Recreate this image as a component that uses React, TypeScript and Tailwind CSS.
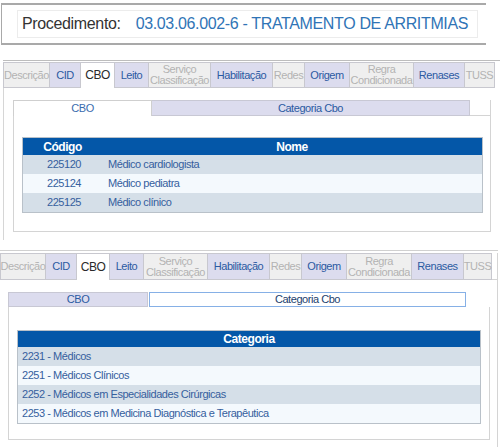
import React from "react";

type Kind = "gray" | "lav" | "sel";

const Tab = ({ w, kind, lines, first }: { w: string; kind: Kind; lines: string[]; first?: boolean }) => {
  const base =
    "flex flex-col items-center justify-center text-center leading-[11px] tracking-[-0.45px] border-t border-r border-[#c8c8cf] shrink-0 h-full";
  const k =
    kind === "gray"
      ? "bg-[#efefef] text-[#b3b3b3] border-b text-[11px]"
      : kind === "lav"
      ? "bg-[#dcdcee] text-[#2b5aa2] border-b text-[11px]"
      : "bg-white text-[#2a2a2a] text-[12px]";
  return (
    <div className={`${base} ${k} ${first ? "border-l" : ""} ${w}`}>
      {lines.map((l) => (
        <span key={l}>{l}</span>
      ))}
    </div>
  );
};

const TabRow = ({ widths, h }: { widths: string[]; h: string }) => {
  const defs: { kind: Kind; lines: string[] }[] = [
    { kind: "gray", lines: ["Descrição"] },
    { kind: "lav", lines: ["CID"] },
    { kind: "sel", lines: ["CBO"] },
    { kind: "lav", lines: ["Leito"] },
    { kind: "gray", lines: ["Serviço", "Classificação"] },
    { kind: "lav", lines: ["Habilitação"] },
    { kind: "gray", lines: ["Redes"] },
    { kind: "lav", lines: ["Origem"] },
    { kind: "gray", lines: ["Regra", "Condicionada"] },
    { kind: "lav", lines: ["Renases"] },
    { kind: "gray", lines: ["TUSS"] },
  ];
  return (
    <div className={`flex ${h}`}>
      {defs.map((d, i) => (
        <Tab key={i} w={widths[i]} kind={d.kind} lines={d.lines} first={i === 0} />
      ))}
    </div>
  );
};

const cboRows = [
  ["225120", "Médico cardiologista"],
  ["225124", "Médico pediatra"],
  ["225125", "Médico clínico"],
];

const catRows = [
  "2231 - Médicos",
  "2251 - Médicos Clínicos",
  "2252 - Médicos em Especialidades Cirúrgicas",
  "2253 - Médicos em Medicina Diagnóstica e Terapêutica",
];

export default function App() {
  return (
    <div
      className="w-[500px] h-[447px] bg-white overflow-hidden"
      style={{ fontFamily: '"Liberation Sans", Arial, sans-serif' }}
    >
      {/* Procedimento header */}
      <div className="mt-[3px] ml-px w-[485px] h-[42px] border-t-2 border-b-2 border-l border-[#a9a9a9] pt-[5px] pl-[15px]">
        <div className="w-[461px] h-[28px] border border-[#ececec] flex items-center pl-[4px] text-[16px] tracking-[-0.35px]">
          <span className="text-[#333]">Procedimento:</span>
          <span className="ml-[15px] text-[#2f74b6]">03.03.06.002-6 - TRATAMENTO DE ARRITMIAS</span>
        </div>
      </div>

      {/* Section 1 */}
      <div className="mt-[15px] ml-[3px] border-t border-[#bdbdbd] pt-px">
        <TabRow
          h="h-[26px]"
          widths={[
            "w-[47px]",
            "w-[31px]",
            "w-[34px]",
            "w-[34px]",
            "w-[62px]",
            "w-[62px]",
            "w-[32px]",
            "w-[45px]",
            "w-[64px]",
            "w-[51px]",
            "w-[30px]",
          ]}
        />
      </div>
      <div className="ml-[3px] h-[152px] border-l border-[#d6d6d6] pt-[12px] pl-[9px]">
        <div className="flex h-[16px] text-[11px] tracking-[-0.45px]">
          <div className="w-[139px] bg-white border-t border-l border-r border-[#cfcfcf] flex items-center justify-center text-[#3a6cae]">
            CBO
          </div>
          <div className="w-[318px] bg-[#dcdcee] border border-l-0 border-[#c8c8d4] flex items-center justify-center text-[#2b5aa2]">
            Categoria Cbo
          </div>
          <div className="w-[21px] border-b border-r border-[#d4d4d4]" />
        </div>
        <div className="w-[478px] h-[116px] border-l border-r border-b border-[#d4d4d4] pt-[21px] pl-[8px]">
          <div className="w-[461px] border border-[#b9c1c9] text-[11px] tracking-[-0.45px]">
            <div className="flex h-[17px] bg-[#0457a8] text-white font-bold text-[12px] items-center">
              <div className="w-[79px] text-center">Código</div>
              <div className="flex-1 text-center">Nome</div>
            </div>
            {cboRows.map((r, i) => (
              <div
                key={r[0]}
                className={`flex h-[19px] items-center text-[#35609e] ${i % 2 === 0 ? "bg-[#d5dfe8]" : "bg-[#f4f9fd]"}`}
              >
                <div className="w-[79px] pl-[24px]">{r[0]}</div>
                <div className="flex-1 pl-[6px]">{r[1]}</div>
              </div>
            ))}
          </div>
        </div>
      </div>

      {/* Section 2 */}
      <div className="mt-[10px] w-[498px] border-t border-[#d0d0d0] pt-[2px] flex">
        <TabRow
          h="h-[27px]"
          widths={[
            "w-[46px]",
            "w-[31px]",
            "w-[33px]",
            "w-[34px]",
            "w-[64px]",
            "w-[62px]",
            "w-[32px]",
            "w-[45px]",
            "w-[65px]",
            "w-[52px]",
            "w-[28px]",
          ]}
        />
        <div className="flex-1 border-b border-r border-[#d4d4d4]" />
      </div>
      <div className="w-[498px] h-[170px] border-r border-[#d4d4d4] pt-[12px] pl-[8px]">
        <div className="flex h-[15px] text-[11px] tracking-[-0.45px]">
          <div className="w-[140px] bg-[#dcdcee] border border-[#c8c8d4] flex items-center justify-center text-[#2b5aa2]">
            CBO
          </div>
          <div className="ml-px w-[317px] bg-white border border-[#86b0e6] flex items-center justify-center text-[#23416e]">
            Categoria Cbo
          </div>
        </div>
        <div className="w-[482px] h-[133px] border-l border-r border-b border-[#d4d4d4] pt-[23px] pl-[8px]">
          <div className="w-[464px] border border-[#b9c1c9] text-[11px] tracking-[-0.45px]">
            <div className="flex h-[16px] bg-[#0457a8] text-white font-bold text-[12px] items-center justify-center">
              Categoria
            </div>
            {catRows.map((r, i) => (
              <div
                key={r}
                className={`flex h-[19px] items-center pl-[4px] text-[#35609e] ${i % 2 === 0 ? "bg-[#d5dfe8]" : "bg-[#f4f9fd]"}`}
              >
                {r}
              </div>
            ))}
          </div>
        </div>
      </div>
    </div>
  );
}
